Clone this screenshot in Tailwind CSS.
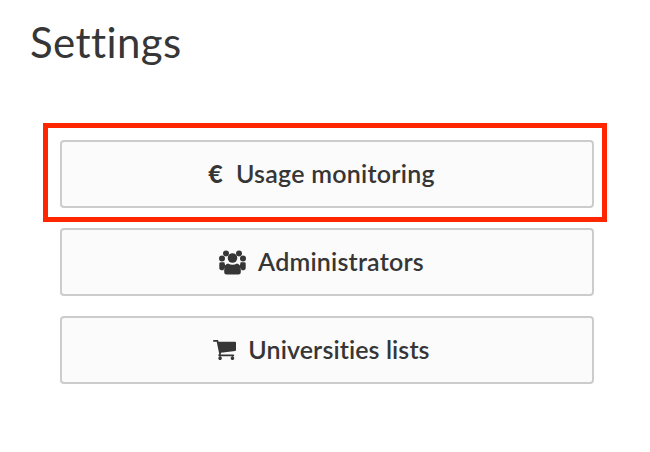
<!DOCTYPE html>
<html lang="en">
<head>
<meta charset="UTF-8" />
<title>Settings</title>
<script src="https://cdn.jsdelivr.net/npm/@tailwindcss/browser@4"></script>
</head>
<body class="bg-white text-[#363636] font-['Lato','Noto_Sans',sans-serif]">
  <div class="relative w-[650px] h-[452px] overflow-hidden">
    <h1 class="pl-[30px] pt-[18px] h-[140px] text-[42px] leading-[48px] font-normal tracking-[0.4px]">Settings</h1>

    <div class="flex flex-col gap-[20px] pl-[60px] w-[594px]">
      <a class="flex items-center justify-center gap-[13px] h-[68px] pr-[11px] bg-[#fbfbfb] border-2 border-[#cccccc] rounded text-[25px] font-semibold tracking-[0.25px]">
        <span class="text-[25px] font-black">€</span>
        <span>Usage monitoring</span>
      </a>
      <a class="flex items-center justify-center gap-[12px] h-[68px] pr-[11px] bg-[#fbfbfb] border-2 border-[#cccccc] rounded text-[25px] font-semibold tracking-[0.2px]">
        <svg class="w-[27px] h-[25px]" viewBox="0 0 27 25" fill="#363636">
          <circle cx="7" cy="3.4" r="3" /><circle cx="20" cy="3.4" r="3" />
          <circle cx="13.5" cy="8" r="4.8" />
          <circle cx="3" cy="8.6" r="3" /><circle cx="24" cy="8.6" r="3" />
          <path d="M0.3 13.5q0-1.3 1.5-1.3h3.6q0.2 3 2 4.6q-2.6 1-3 3.4h-2.2q-1.9-0.3-1.9-2z" />
          <path d="M26.7 13.5q0-1.3-1.5-1.3h-3.6q-0.2 3-2 4.6q2.6 1 3 3.4h2.2q1.9-0.3 1.9-2z" />
          <path d="M9 13.5q4.5 2.6 9 0q3.8 0.8 3.8 6v2.5q0 2.5-2.5 2.5h-11.6q-2.5 0-2.5-2.5v-2.5q0-5.2 3.8-6z" />
        </svg>
        <span>Administrators</span>
      </a>
      <a class="flex items-center justify-center gap-[12px] h-[68px] pr-[11px] bg-[#fbfbfb] border-2 border-[#cccccc] rounded text-[25px] font-semibold tracking-[0.1px]">
        <svg class="w-[23px] h-[20px]" viewBox="64 256 1664 1408" preserveAspectRatio="none" fill="#363636">
          <path d="M704 1536q0 52-38 90t-90 38-90-38-38-90 38-90 90-38 90 38 38 90zm896 0q0 52-38 90t-90 38-90-38-38-90 38-90 90-38 90 38 38 90zm128-1088v512q0 24-16.5 42.5t-40.5 21.5l-1044 122q13 60 13 70 0 16-24 64h920q26 0 45 19t19 45-19 45-45 19h-1024q-26 0-45-19t-19-45q0-11 8-31.5t16-36 21.5-40 15.5-29.5l-177-823h-204q-26 0-45-19t-19-45 19-45 45-19h256q16 0 28.5 6.5t19.5 15.5 13 24.5 8 26 5.5 29.5 4.5 26h1201q26 0 45 19t19 45z" />
        </svg>
        <span>Universities lists</span>
      </a>
    </div>

    <!-- red highlight drawn over the first button -->
    <div class="absolute left-[43px] top-[123px] w-[564px] h-[99px] border-[5px] border-[#ff2600] pointer-events-none"></div>
  </div>
</body>
</html>
